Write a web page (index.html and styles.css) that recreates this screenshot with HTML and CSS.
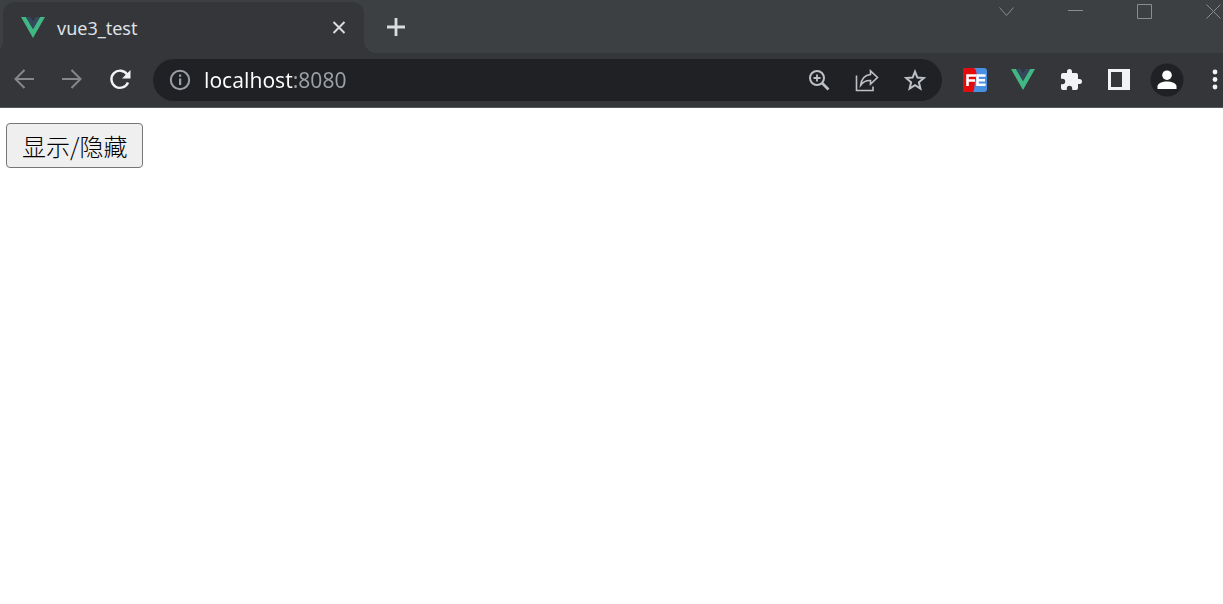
FILE: index.html
```html
<!DOCTYPE html>
<html lang="zh-CN">
<head>
<meta charset="utf-8">
<title>vue3_test</title>
<link rel="stylesheet" href="styles.css">
</head>
<body>
<header class="browser">
  <div class="tab-strip">
    <div class="tab">
      <svg class="vue-logo" width="24" height="22" viewBox="0 0 24 22" aria-hidden="true"><path fill="#41b883" d="M0 0h5l7 12 7-12h5L12 21z"/><path fill="#34495e" d="M5 0h4.400l2.600 4.500L14.600 0H19l-7 12z"/></svg>
      <span class="tab-title">vue3_test</span>
      <button class="tab-close" aria-label="Close tab"><svg width="14" height="14" viewBox="0 0 14 14"><path d="M1.500 1l11 11m0-11l-11 11" stroke="#dadce0" stroke-width="2"/></svg></button>
    </div>
    <button class="new-tab" aria-label="New tab"><svg width="18" height="18" viewBox="0 0 18 18"><path d="M9 0v18M0 9h18" stroke="#dadce0" stroke-width="2.800"/></svg></button>
    <div class="window-controls">
      <button aria-label="Search tabs"><svg width="15" height="15" viewBox="0 0 15 15"><path d="M.5 3.500l7 8 7-8"/></svg></button>
      <button aria-label="Minimize"><svg width="15" height="15" viewBox="0 0 15 15"><path d="M0 6.500h15"/></svg></button>
      <button aria-label="Maximize"><svg width="15" height="15" viewBox="0 0 15 15"><path d="M.5.5h14v14H.5z"/></svg></button>
      <button class="window-close" aria-label="Close"><svg width="15" height="15" viewBox="0 0 15 15"><path d="M.5.5l14 14m0-14l-14 14"/></svg></button>
    </div>
  </div>
  <div class="toolbar">
    <button class="tool" aria-label="Back"><svg width="24" height="24" viewBox="0 0 24 24" fill="none" stroke="#85878a" stroke-width="2"><path d="M22 11H3.500M12.500 2l-9 9 9 9"/></svg></button>
    <button class="tool" aria-label="Forward"><svg width="24" height="24" viewBox="0 0 24 24" fill="none" stroke="#85878a" stroke-width="2"><path d="M2 11h18.500M11.500 2l9 9-9 9"/></svg></button>
    <button class="tool" aria-label="Reload"><svg width="24" height="24" viewBox="0 0 24 24"><path d="M19.200 6.500A8.600 8.600 0 1 0 20 14.500" fill="none" stroke="#f1f3f4" stroke-width="2.400"/><path fill="#f1f3f4" d="M22.500 2v8.500H14z"/></svg></button>
    <div class="omnibox">
      <svg class="info" width="22" height="22" viewBox="0 0 22 22" aria-hidden="true"><circle cx="11" cy="11" r="9.200" fill="none" stroke="#9aa0a6" stroke-width="2"/><path fill="#9aa0a6" d="M10 5.500h2.200v2.200H10zM10 9.600h2.200V16H10z"/></svg>
      <input class="address" type="text" aria-label="Address" value="localhost:8080" spellcheck="false">
      <button class="tool" aria-label="Zoom"><svg width="24" height="24" viewBox="0 0 24 24" fill="none" stroke="#bdc1c6" stroke-width="2"><circle cx="10" cy="10" r="7"/><path d="M15 15l6.500 6.500" stroke-width="2.600"/><path d="M10 6.500v7M6.500 10h7" stroke-width="1.800"/></svg></button>
      <button class="tool" aria-label="Share"><svg width="24" height="24" viewBox="0 0 24 24" fill="none" stroke="#bdc1c6" stroke-width="1.600"><path d="M1.500 7.500v15H18v-4"/><path d="M15.500 2.800l7 6.700-7 6.700v-3.700c-4.500-.3-7.500 1.500-9.800 4.700.6-5.700 3.600-10 9.800-10.700z"/></svg></button>
      <button class="tool" aria-label="Bookmark"><svg width="24" height="24" viewBox="0 0 24 24" fill="none" stroke="#bdc1c6" stroke-width="2"><path d="M12 3.700l2.400 5.900 6.400.5-4.900 4.200 1.500 6.300-5.400-3.400-5.400 3.400 1.500-6.300-4.900-4.200 6.400-.5z"/></svg></button>
    </div>
    <button class="tool" aria-label="FE extension"><svg width="24" height="24" viewBox="0 0 24 24"><rect width="24" height="24" rx="3" fill="#4a90e2"/><path fill="#e60b0b" d="M3 0h8c3 2 3 7 1.500 12S12 22 10 24H3a3 3 0 0 1-3-3V3a3 3 0 0 1 3-3z"/><path d="M4.500 18V7.500H13M4.500 12.500H12M22.500 7.500h-8v9.300h8M14.500 12.300H22" fill="none" stroke="#fff" stroke-width="2.600"/></svg></button>
    <button class="tool" aria-label="Vue.js devtools"><svg width="24" height="22" viewBox="0 0 24 22"><path fill="#41b883" d="M0 0h5l7 12 7-12h5L12 21z"/><path fill="#34495e" d="M5 0h4.400l2.600 4.500L14.600 0H19l-7 12z"/></svg></button>
    <button class="tool" aria-label="Extensions"><svg width="24" height="24" viewBox="0 0 24 24"><path fill="#f1f3f4" d="M20.500 11H19V7a2 2 0 0 0-2-2h-4V3.500a2.500 2.500 0 0 0-5 0V5H4a2 2 0 0 0-2 2v3.800h1.500a2.700 2.700 0 0 1 0 5.400H2V20a2 2 0 0 0 2 2h3.800v-1.500a2.700 2.700 0 0 1 5.400 0V22H17a2 2 0 0 0 2-2v-4h1.500a2.500 2.500 0 0 0 0-5z"/></svg></button>
    <button class="tool" aria-label="Side panel"><svg width="22" height="22" viewBox="0 0 22 22"><path fill="#f1f3f4" fill-rule="evenodd" d="M0 0h22v21H0zM3 3v15h11V3z"/></svg></button>
    <button class="tool" aria-label="Profile"><svg width="34" height="34" viewBox="0 0 34 34"><circle cx="17" cy="17" r="16.500" fill="#202124"/><circle cx="17" cy="12.200" r="4.800" fill="#fff"/><path fill="#fff" d="M7.500 26v-2.500c0-3.500 5-5 9.500-5s9.500 1.500 9.500 5V26z"/></svg></button>
    <button class="menu" aria-label="Menu"><svg width="16" height="22" viewBox="0 0 16 22" fill="#f1f3f4"><circle cx="8" cy="3" r="2.400"/><circle cx="8" cy="10.500" r="2.400"/><circle cx="8" cy="18" r="2.400"/></svg></button>
  </div>
</header>
<main class="page">
  <button class="toggle">显示/隐藏</button>
</main>
</body>
</html>
```
FILE: styles.css
```css
* {
  box-sizing: border-box;
}

body {
  margin: 0;
  background: #fff;
  font-family: "Noto Sans", "Noto Sans CJK SC", sans-serif;
}

svg {
  display: block;
  flex: none;
}

.browser button {
  display: flex;
  align-items: center;
  justify-content: center;
  flex: none;
  padding: 0;
  border: 0;
  background: none;
}

.tab-strip {
  display: flex;
  align-items: flex-start;
  height: 53px;
  padding: 2px 0 0 3px;
  background: #3c4043;
}

.tab {
  position: relative;
  display: flex;
  align-items: center;
  width: 361px;
  height: 51px;
  padding: 0 18px;
  border-radius: 12px 12px 0 0;
  background: #35363a;
}

.tab::before,
.tab::after {
  content: "";
  position: absolute;
  bottom: 0;
  width: 12px;
  height: 12px;
}

.tab::before {
  right: 100%;
  background: radial-gradient(circle at 0 0, transparent 12px, #35363a 12px);
}

.tab::after {
  left: 100%;
  background: radial-gradient(circle at 100% 0, transparent 12px, #35363a 12px);
}

.tab-title {
  flex: 1;
  padding-left: 12px;
  color: #dfe1e5;
  font-size: 18px;
  line-height: 24px;
}

.new-tab {
  width: 64px;
  height: 50px;
}

.window-controls {
  display: flex;
  height: 18px;
  margin-left: auto;
}

.window-controls button {
  width: 69px;
}

.window-controls .window-close {
  width: 44px;
  justify-content: flex-end;
  padding-right: 2px;
}

.window-controls svg {
  fill: none;
  stroke: #8a8d90;
}

.toolbar {
  display: flex;
  align-items: center;
  height: 55px;
  border-bottom: 1px solid #57585c;
  background: #35363a;
}

.tool {
  width: 48px;
  height: 42px;
}

.menu {
  width: 32px;
  height: 42px;
}

.browser .menu {
  justify-content: flex-end;
}

.omnibox {
  display: flex;
  align-items: center;
  flex: 1;
  min-width: 0;
  height: 42px;
  margin: 0 9px;
  padding: 0 3px 0 16px;
  border-radius: 21px;
  background: #202124;
}

.address {
  flex: 1;
  min-width: 0;
  margin-left: 13px;
  padding: 0;
  border: 0;
  outline: 0;
  background: linear-gradient(to right, #fff 89px, #9aa0a6 89px);
  background-clip: text;
  -webkit-background-clip: text;
  color: transparent;
  font-family: inherit;
  font-size: 21px;
  line-height: 30px;
}

.page {
  padding: 15px 6px;
}

.toggle {
  padding: 4px 15px;
  border: 1px solid #767676;
  border-radius: 4px;
  background: #efefef;
  color: #000;
  font-family: "Noto Sans CJK SC", sans-serif;
  font-size: 24px;
  font-weight: 300;
  line-height: 35px;
}
```
